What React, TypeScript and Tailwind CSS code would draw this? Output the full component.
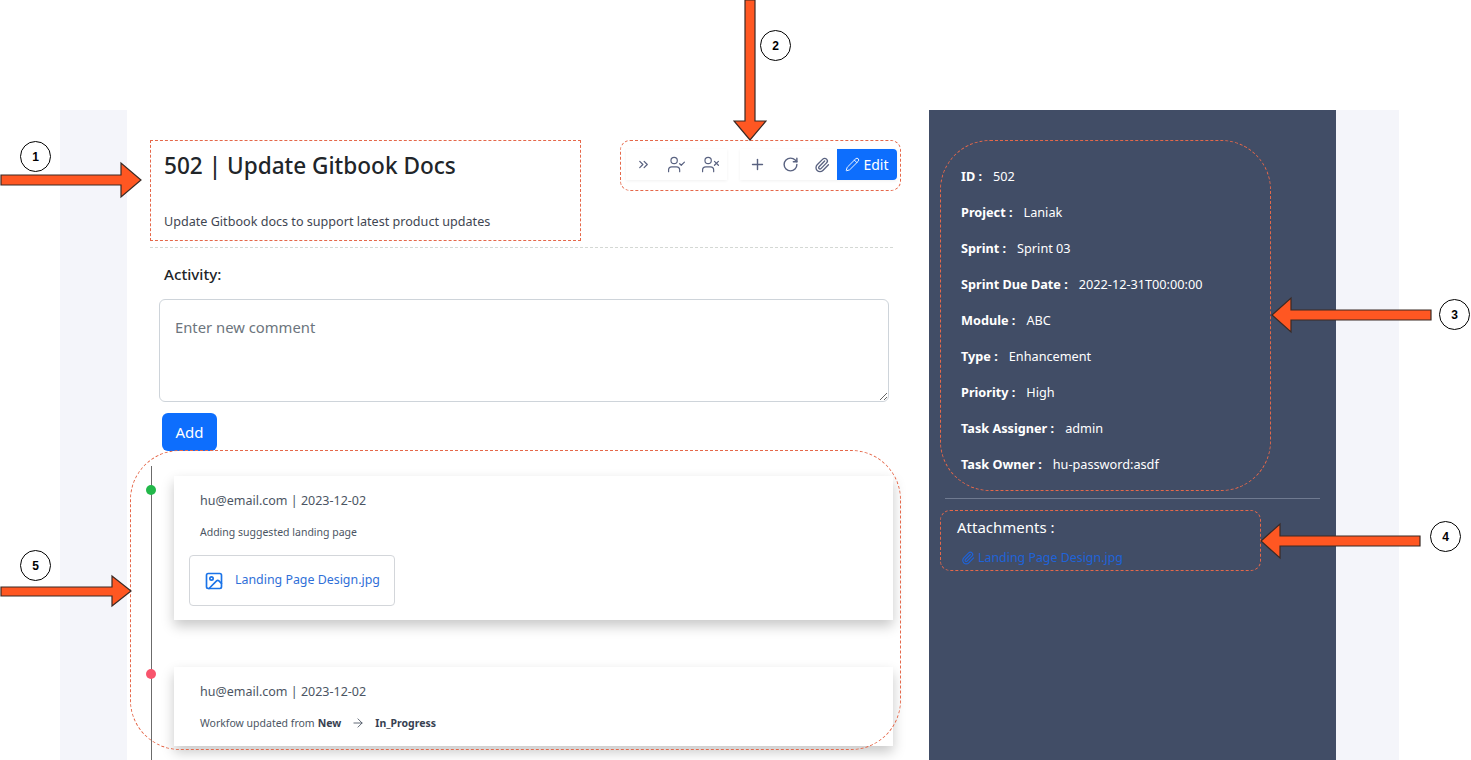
import React from "react";
import {
  ChevronsRight,
  UserCheck,
  UserX,
  Plus,
  RotateCw,
  Paperclip,
  Pencil,
  Image,
  ArrowRight,
} from "lucide-react";

const details = [
  { label: "ID :", value: "502" },
  { label: "Project :", value: "Laniak" },
  { label: "Sprint :", value: "Sprint 03" },
  { label: "Sprint Due Date :", value: "2022-12-31T00:00:00" },
  { label: "Module :", value: "ABC" },
  { label: "Type :", value: "Enhancement" },
  { label: "Priority :", value: "High" },
  { label: "Task Assigner :", value: "admin" },
  { label: "Task Owner :", value: "hu-password:asdf" },
];

// red arrow pointing at a region, drawn over the page
const Arrow = ({ x, y, w, h, points }: { x: number; y: number; w: number; h: number; points: string }) => (
  <svg className="absolute" style={{ left: x, top: y }} width={w} height={h} viewBox={`0 0 ${w} ${h}`}>
    <polygon points={points} fill="#ff5722" stroke="#3a2a25" strokeWidth="1.2" />
  </svg>
);

const Badge = ({ x, y, n }: { x: number; y: number; n: number }) => (
  <div
    className="absolute w-[31px] h-[31px] rounded-full border border-black bg-white flex items-center justify-center text-[12px] font-bold text-black font-['Liberation_Sans',sans-serif]"
    style={{ left: x, top: y }}
  >
    {n}
  </div>
);

const Outline = ({ x, y, w, h, r }: { x: number; y: number; w: number; h: number; r: string }) => (
  <div
    className={`absolute border border-dashed border-[#e5684a] ${r}`}
    style={{ left: x, top: y, width: w, height: h }}
  />
);

const Annotations = () => (
  <>
    <Outline x={150} y={140} w={431} h={101} r="rounded-none" />
    <Outline x={620} y={140} w={281} h={51} r="rounded-[10px]" />
    <Outline x={940} y={140} w={331} h={351} r="rounded-[50px]" />
    <Outline x={940} y={510} w={321} h={61} r="rounded-[10px]" />
    <Outline x={130} y={450} w={771} h={300} r="rounded-[50px]" />

    <Arrow x={0} y={161} w={142} h={38} points="1,14 121,14 121,2 141,19 121,36 121,24 1,24" />
    <Arrow x={733} y={0} w={34} h={142} points="12,0 22,0 22,121 33,121 17,140 1,121 12,121" />
    <Arrow x={1270} y={296} w={162} h={38} points="161,14 21,14 21,2 2,19 21,36 21,24 161,24" />
    <Arrow x={1259} y={522} w={162} h={38} points="161,14 21,14 21,2 2,19 21,36 21,24 161,24" />
    <Arrow x={0} y={574} w={133} h={34} points="1,13 112,13 112,2 131,17 112,32 112,22 1,22" />

    <Badge x={20} y={141} n={1} />
    <Badge x={760} y={30} n={2} />
    <Badge x={1439} y={299} n={3} />
    <Badge x={1430} y={521} n={4} />
    <Badge x={20} y={550} n={5} />
  </>
);

const ActivityCard = ({ dot, children, className }: { dot: string; children: React.ReactNode; className: string }) => (
  <div className={`relative bg-white shadow-[0_6px_12px_rgba(0,0,0,0.22)] pl-[26px] ${className}`}>
    <span className={`absolute left-[-28px] rounded-full w-[10px] h-[10px] ${dot}`} />
    <p className="text-[12.5px] leading-[18px] text-[#4b5563] pt-[16px]">hu@email.com | 2023-12-02</p>
    {children}
  </div>
);

export default function App() {
  return (
    <div className="relative w-[1471px] h-[760px] overflow-hidden bg-white font-['Noto_Sans','Open_Sans',sans-serif]">
      <div className="pt-[110px] pl-[60px]">
        <div className="w-[1339px] h-[650px] bg-[#f4f5fa] pl-[67px] pr-[63px] flex">
          {/* Main column */}
          <div className="w-[802px] bg-white pl-[23px] pr-[36px]">
            <div className="flex justify-between pt-[39px] h-[138px] border-b border-dashed border-[#d4d8d4]">
              <div className="pl-[14px]">
                <h1 className="text-[22.6px] leading-[34px] font-medium text-[#212529]">502 | Update Gitbook Docs</h1>
                <p className="text-[12.6px] leading-[18px] text-[#3f4652] mt-[30px]">
                  Update Gitbook docs to support latest product updates
                </p>
              </div>
              <div className="flex mr-[-4px] h-[31px] text-[#596280]">
                <div className="flex items-center w-[101px] pl-[10px] shadow-[0_1px_3px_rgba(0,0,0,0.06)]">
                  <ChevronsRight size={15} />
                  <UserCheck size={19} strokeWidth={1.5} className="ml-[16px]" />
                  <UserX size={19} strokeWidth={1.5} className="ml-[15px]" />
                </div>
                <div className="flex items-center ml-[13px] pl-[9px] shadow-[0_1px_3px_rgba(0,0,0,0.06)]">
                  <Plus size={17} />
                  <RotateCw size={17} className="ml-[16px]" />
                  <Paperclip size={16} className="ml-[15px] mr-[7px]" />
                  <button className="h-[31px] w-[60px] bg-[#0d6efd] text-white text-[14px] rounded-r-[4px] flex items-center justify-center gap-[3px]">
                    <Pencil size={15} strokeWidth={1.5} />
                    Edit
                  </button>
                </div>
              </div>
            </div>

            <h2 className="text-[15.2px] leading-[20px] font-medium text-[#212529] pl-[14px] mt-[16px]">Activity:</h2>
            <textarea
              readOnly
              placeholder="Enter new comment"
              className="block w-[730px] h-[103px] ml-[9px] mt-[15px] border border-[#ced4da] rounded-[6px] px-[15px] py-[16px] text-[14.8px] leading-[22px] placeholder:text-[#6c757d] bg-white outline-none"
            />
            <button className="block ml-[12px] mt-[11px] w-[55px] h-[38px] bg-[#0d6efd] text-white text-[15px] rounded-[6px]">
              Add
            </button>

            {/* Timeline */}
            <div className="ml-[1px] mt-[15px] h-[294px] border-l border-[#6b6b6b] pl-[22px]">
              <div className="pt-[10px] flex flex-col gap-[47px]">
                <ActivityCard dot="bg-[#22b84a] top-[9px]" className="h-[144px]">
                  <p className="text-[10.5px] leading-[16px] text-[#4b5563] mt-[14px]">Adding suggested landing page</p>
                  <div className="mt-[15px] -ml-[11px] w-[206px] h-[51px] border border-[#d3d6da] rounded-[4px] flex items-center pl-[14px] gap-[11px] text-[#2f6fd8]">
                    <Image size={20} className="text-[#1a73e8]" />
                    <span className="text-[12.4px]">Landing Page Design.jpg</span>
                  </div>
                </ActivityCard>
                <ActivityCard dot="bg-[#f8546c] top-[2px]" className="h-[79px]">
                  <p className="text-[10.5px] leading-[16px] text-[#4b5563] mt-[14px] flex items-center">
                    Workfow updated from <b className="ml-[3px] text-[#374151]">New</b>
                    <ArrowRight size={14} className="mx-[10px]" strokeWidth={1.5} />
                    <b className="text-[#374151]">In_Progress</b>
                  </p>
                </ActivityCard>
              </div>
            </div>
          </div>

          {/* Details panel */}
          <div className="w-[407px] bg-[#414d66] text-white px-[16px]">
            <dl className="pt-[57px] pl-[16px] flex flex-col gap-[18px] h-[388px]">
              {details.map((d) => (
                <div key={d.label} className="flex text-[12.7px] leading-[18px]">
                  <dt className="font-bold mr-[11px]">{d.label}</dt>
                  <dd>{d.value}</dd>
                </div>
              ))}
            </dl>
            <div className="border-t border-[#6f7a90] pt-[17px] pl-[12px]">
              <h3 className="text-[15px] leading-[22px]">Attachments :</h3>
              <div className="flex items-center gap-[3px] mt-[11px] pl-[4px] text-[#1f63d8] text-[12.4px] leading-[18px]">
                <Paperclip size={14} />
                Landing Page Design.jpg
              </div>
            </div>
          </div>
        </div>
      </div>
      <Annotations />
    </div>
  );
}
